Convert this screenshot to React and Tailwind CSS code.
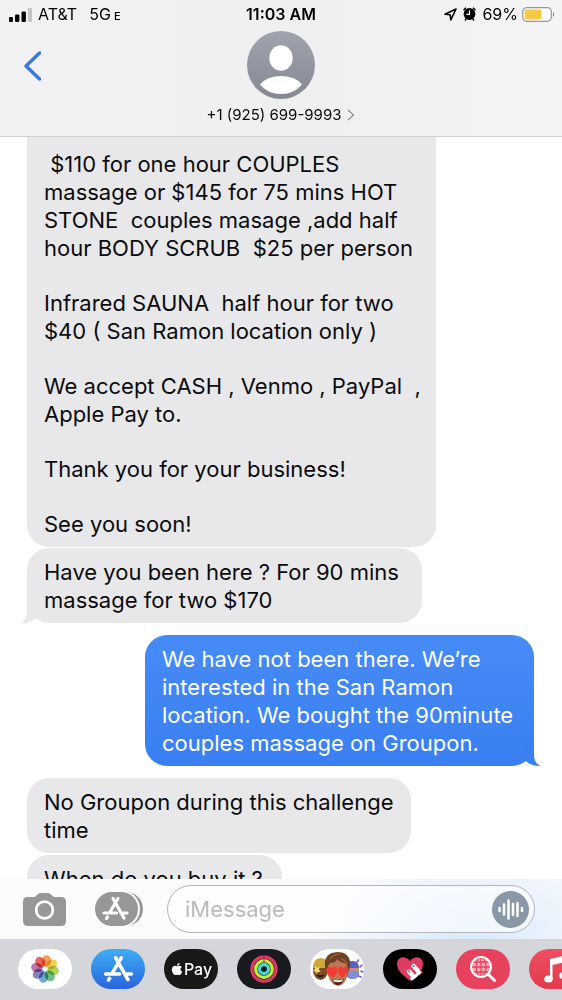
import React from "react";
import { FaApple } from "react-icons/fa";

const ink = "text-[#0b0b0d]";

function Status() {
  return (
    <div className="grid grid-cols-3 items-center h-7 px-2 text-base text-black">
      <div className="flex items-center gap-1.5">
        <svg width="24" height="15" viewBox="0 0 24 15" aria-hidden="true">
          <rect x="1" y="10" width="4" height="5" rx="1.2" />
          <rect x="7" y="7.5" width="4.4" height="7.5" rx="1.2" />
          <rect x="13.5" y="4.5" width="4.4" height="10.5" rx="1.2" />
          <rect x="20" y="1" width="4" height="14" rx="1.2" fill="#c4c4c6" />
        </svg>
        <span>AT&amp;T</span>
        <span className="ml-1.5 flex items-baseline gap-[3px]">5G<span className="text-[11px] font-medium">E</span></span>
      </div>
      <div className="text-center font-semibold">11:03 AM</div>
      <div className="flex items-center justify-end gap-1.5">
        <svg width="13" height="13" viewBox="0 0 13 13" fill="none" stroke="#000" strokeWidth="1.6" strokeLinejoin="round" aria-hidden="true">
          <path d="M12 1 L1 6.2 L6.2 6.8 L6.8 12 Z" />
        </svg>
        <svg width="13" height="14" viewBox="0 0 13 14" aria-hidden="true">
          <circle cx="6.5" cy="7" r="5.9" />
          <path d="M.6 3.2 L3 .8 M12.4 3.2 L10 .8 M2 13.4 L3.2 12 M11 13.4 L9.8 12" stroke="#000" strokeWidth="1.5" />
          <path d="M6.5 3.4 V7.4 H3.4" fill="none" stroke="#fff" strokeWidth="1.2" />
        </svg>
        <span>69%</span>
        <svg width="33" height="15" viewBox="0 0 33 15" className="-ml-0.5 -mr-px" aria-hidden="true">
          <rect x=".7" y=".7" width="28.6" height="13.6" rx="4" fill="#fbfbfb" stroke="#97979b" strokeWidth="1.2" />
          <rect x="2.6" y="2.6" width="17" height="9.8" rx="2" fill="#f5c944" />
          <path d="M31 5 Q33 7.5 31 10 Z" fill="#77777b" />
        </svg>
      </div>
    </div>
  );
}

function Header() {
  return (
    <header className={`shrink-0 h-[137px] border-b border-[#d2d2d5] bg-linear-to-r from-[#f2f2f4] via-[#efeff2] to-[#f4f4f6] ${ink}`}>
      <Status />
      <div className="grid grid-cols-[1fr_auto_1fr] px-5">
        <button aria-label="Back" className="justify-self-start self-start mt-5 h-9 w-6 flex items-center justify-center">
          <svg width="18" height="30" viewBox="0 0 18 30" fill="none" stroke="#3a76de" strokeWidth="3.4" strokeLinecap="round" strokeLinejoin="round">
            <path d="M16.500 2 L3 15 L16.500 28" />
          </svg>
        </button>
        <button className="flex flex-col items-center pt-[3px]">
          <svg width="68" height="68" viewBox="0 0 68 68" aria-hidden="true">
            <defs>
              <linearGradient id="avatar" x2="0" y2="1">
                <stop stopColor="#a0a4b0" />
                <stop offset="1" stopColor="#858892" />
              </linearGradient>
            </defs>
            <circle cx="34" cy="34" r="34" fill="url(#avatar)" />
            <ellipse cx="34" cy="27" rx="11.7" ry="12.7" fill="#fff" />
            <path d="M13 53.5 Q20 45 34 45 Q48 45 55 53.5 Q47 63 34 63 Q21 63 13 53.5Z" fill="#fff" />
          </svg>
          <span className="flex items-center gap-1.5 text-[15px] leading-6 mt-1">
            +1 (925) 699-9993
            <svg width="8" height="12" viewBox="0 0 8 12" fill="none" stroke="#8c8c90" strokeWidth="1.2" aria-hidden="true">
              <path d="M1 1 L6.5 6 L1 11" />
            </svg>
          </span>
        </button>
        <span />
      </div>
    </header>
  );
}

function Received({ children, className = "", tail }) {
  return (
    <div className={`relative self-start bg-[#e8e8ea] px-[17px] pb-[9px] ${className}`}>
      {children}
      {tail && (
        <svg className="absolute bottom-0 -left-1.5" width="16" height="24" viewBox="0 0 16 24" fill="#e8e8ea" aria-hidden="true">
          <path d="M6 0 V12 C6 18 4 22 0 24 C6 24.300 11 23 14 19.500 V0Z" />
        </svg>
      )}
    </div>
  );
}

function Messages() {
  return (
    <main className={`flex-1 min-h-0 overflow-hidden flex flex-col pl-[27px] pr-7 bg-white text-[22px] leading-7 whitespace-pre ${ink}`}>
      <Received className="shrink-0 w-[409px] pt-[13px] rounded-b-[22px] flex flex-col gap-[27px]">
        <p>{" $110 for one hour COUPLES\nmassage or $145 for 75 mins HOT\nSTONE  couples masage ,add half\nhour BODY SCRUB  $25 per person"}</p>
        <p>{"Infrared SAUNA  half hour for two\n$40 ( San Ramon location only )"}</p>
        <p>{"We accept CASH , Venmo , PayPal  ,\nApple Pay to."}</p>
        <p>Thank you for your business!</p>
        <p>See you soon!</p>
      </Received>
      <Received tail className="shrink-0 mt-px w-[395px] pt-2.5 rounded-[22px]">
        <p>{"Have you been here ? For 90 mins\nmassage for two $170"}</p>
      </Received>
      <div className="relative shrink-0 self-end mt-3 w-[389px] rounded-[22px] bg-linear-to-b from-[#468bf5] to-[#3a7ff2] px-[17px] pt-2.5 pb-[9px] text-white">
        <p>{"We have not been there. We’re\ninterested in the San Ramon\nlocation. We bought the 90minute\ncouples massage on Groupon."}</p>
        <svg className="absolute bottom-0 -right-[7px]" width="17" height="24" viewBox="0 0 17 24" fill="#3b80f2" aria-hidden="true">
          <path d="M10 0 V12 C10 18 12 22 17 24 C11 24.300 5 22.500 2 19 V0Z" />
        </svg>
      </div>
      <Received className="shrink-0 mt-3 w-[384px] pt-2.5 rounded-[22px]">
        <p>{"No Groupon during this challenge\ntime"}</p>
      </Received>
      <Received className="shrink-0 mt-0.5 w-[255px] pt-2.5 rounded-[22px]">
        <p>When do you buy it ?</p>
      </Received>
    </main>
  );
}

function StoreMark() {
  return (
    <g fill="none" stroke="#fff" strokeWidth="3.2" strokeLinecap="round">
      <path d="M15.500 1.500 L7.500 15 M10.500 1.500 L21.500 21 M1.500 16 H14 M20 16 H24.500 M5 20 L4 21.500" />
    </g>
  );
}

function Composer() {
  return (
    <div className="flex items-center h-[60px] pl-[23px] pr-[27px] bg-[radial-gradient(ellipse_160px_90px_at_84%_90%,#d9e9fd,#fbfbfc)]">
      <button aria-label="Camera">
        <svg width="43" height="34" viewBox="0 0 43 34">
          <path d="M4 5 H11 Q13 5 14 3 Q15.500 1 17.500 1 H25 Q27 1 28.500 3 Q30 5 32 5 H38 Q43 5 43 10 V29 Q43 34 38 34 H5 Q0 34 0 29 V10 Q0 5 4 5Z" fill="#97979a" />
          <circle cx="21.500" cy="18" r="8.400" fill="none" stroke="#fff" strokeWidth="2.700" />
        </svg>
      </button>
      <button aria-label="Apps" className="ml-[29px]">
        <svg width="48" height="36" viewBox="0 0 48 36">
          <rect x="5" y="1" width="43" height="34" rx="17" fill="#97979a" />
          <rect x="-2" y="-1" width="47" height="38" rx="19" fill="#fcfcfd" />
          <rect x="0" y="1" width="43" height="34" rx="17" fill="#97979a" />
          <g transform="translate(7.500 6)"><StoreMark /></g>
        </svg>
      </button>
      <div className="flex flex-1 min-w-0 items-center ml-6 h-12 rounded-full border border-[#b4b6ba] bg-white/60 pl-[17px] pr-[5px]">
        <input aria-label="iMessage" placeholder="iMessage" className="flex-1 min-w-0 bg-transparent text-[22px] outline-none placeholder:text-[#bbbbbe]" />
        <button aria-label="Record audio" className="shrink-0">
          <svg width="37" height="37" viewBox="0 0 37 37">
            <circle cx="18.500" cy="18.500" r="18.500" fill="#8a97a6" />
            <path d="M7.500 17 V20 M12 13.500 V23.500 M16.500 9.500 V27.500 M21 13 V24 M25.500 12 V25 M30 17 V20" stroke="#fff" strokeWidth="2.500" strokeLinecap="round" />
          </svg>
        </button>
      </div>
    </div>
  );
}

const petals = ["#f08a2c", "#ecc92f", "#a3c83c", "#4fae62", "#4f93cc", "#6a68b5", "#b05a9c", "#e4483c"];

function StripApp({ label, className, children }) {
  return (
    <button aria-label={label} className={`shrink-0 w-[54px] h-10 rounded-full overflow-hidden flex items-center justify-center ${className}`}>
      {children}
    </button>
  );
}

function AppStrip() {
  return (
    <nav aria-label="iMessage apps" className="flex gap-[19px] h-[61px] pt-2.5 pl-[18px] overflow-hidden bg-[#d5d6dc]">
      <StripApp label="Photos" className="bg-white">
        <svg width="28" height="28" viewBox="0 0 28 28">
          {petals.map((c, i) => (
            <ellipse key={c} cx="14" cy="5.800" rx="4.700" ry="5.800" fill={c} opacity=".82" transform={`rotate(${i * 45 + 10} 14 14)`} className="mix-blend-multiply" />
          ))}
          <circle cx="14" cy="14" r="1.800" fill="#fff" />
        </svg>
      </StripApp>
      <StripApp label="App Store" className="bg-linear-to-b from-[#3faef5] to-[#2b62dd]">
        <svg width="29" height="27" viewBox="0 0 26 24"><StoreMark /></svg>
      </StripApp>
      <StripApp label="Apple Pay" className="bg-[#191918] text-white text-base font-medium">
        <FaApple size={14} className="shrink-0" /><span>Pay</span>
      </StripApp>
      <StripApp label="Fitness" className="bg-[#191a20]">
        <svg width="28" height="28" viewBox="0 0 28 28" fill="none" strokeWidth="3.300">
          <circle cx="14" cy="14" r="12.100" stroke="#e03660" />
          <circle cx="14" cy="14" r="8.300" stroke="#c1ed3b" />
          <circle cx="14" cy="14" r="4.500" stroke="#49d8dc" />
          <path d="M14 0 V7" stroke="#8f2039" strokeWidth="1" />
        </svg>
      </StripApp>
      <StripApp label="Memoji" className="bg-white">
        <svg width="54" height="40" viewBox="0 0 54 40" className="shrink-0">
          <ellipse cx="10.500" cy="21" rx="7.500" ry="10" fill="#7b4c20" />
          <path d="M3 19 Q3 9 11 9 Q19 9 18 19Z" fill="#cfa838" />
          <path d="M5 17 L7 19 L9.500 18 L9 21 L11 23 L8 23 L6 25 L5.500 22.500 L3 21.500 L5 20Z" fill="#f4dc73" />
          <path d="M6 26 Q10 31 15 26Z" fill="#2e1810" />
          <rect x="36" y="12" width="13" height="18" rx="6" fill="#5860c6" />
          <path d="M38 19 H49 V23 H39Z" fill="#c98d7c" />
          <path d="M38 23 Q44 20 49 23 L48 28 Q43 32 38 28Z" fill="#7f91dc" />
          <path d="M47 13 L48.500 11 M50 18 L52 16 M48.500 27 L51 28 M51 22 L53 23" stroke="#6960d4" strokeWidth="1.600" strokeLinecap="round" />
          <path d="M17 18 Q17 8 27 7 Q38 7 38 19 Q38 29 34 34 Q28 40 22 34 Q17 28 17 18Z" fill="#be7655" />
          <path d="M17 24 Q13 15 16 9 Q19 3 28 3 Q36 3 39 9 Q42 16 38 24 Q38 16 35 14 Q31 14 27 10 Q26 14 20 14 Q17 17 17 24Z" fill="#6d4024" />
          <path d="M20 10 Q24 5 30 5 M31 10 Q36 11 37 16" fill="none" stroke="#966039" strokeWidth="1.300" />
          <path d="M23.500 29 C17 26 15 22 17 19 Q19 16.500 21.500 19 Q25 16 27 19 C28.500 22 26 26 23.500 29Z M32 29 C29 26 27 22 28.500 19 Q30 16 33 19 Q36 16 38 19 C40 23 36 26 32 29Z" fill="#f23b35" />
          <path d="M22 30 Q28 32 34 29.500 Q32 36.500 27.500 36 Q24 35.500 22 30Z" fill="#51231d" />
          <path d="M23 30.500 Q28 32 33 30.200 L32 32.500 Q28 34 24 32.500Z" fill="#fff" />
        </svg>
      </StripApp>
      <StripApp label="Digital Touch" className="bg-black">
        <svg width="30" height="28" viewBox="0 0 30 28">
          <path d="M15 26 C8 20 2 16 2 9 C2 1 11 0 15 6 C19 0 28 1 28 9 C28 16 22 20 15 26Z" fill="#e03b61" />
          <path d="M12 17 L18 24 M17.500 10.500 L26 19" stroke="#e03b61" strokeWidth="5" />
          <path d="M14 16.500 L18 21 M18.500 11 L23 16" stroke="#fff" strokeWidth="4.400" strokeLinecap="round" />
          <path d="M16 24.500 L20 21.500 L25.500 16.500" stroke="#fff" strokeWidth="3" fill="none" />
          <path d="M13.500 16 L14.500 17 M18 10.500 L19 11.500" stroke="#e03b61" strokeWidth="1.300" strokeLinecap="round" />
        </svg>
      </StripApp>
      <StripApp label="Images" className="bg-[#e8415d]">
        <svg width="28" height="28" viewBox="0 0 28 28" fill="none" stroke="#fff">
          <circle cx="12" cy="12" r="9.800" fill="#f5aab6" />
          <path d="M12 2 V22 M2 12 H22 M4 7 H20 M4 17 H20" stroke="#e8415d" strokeWidth="1.300" />
          <ellipse cx="12" cy="12" rx="5" ry="9.500" stroke="#e8415d" strokeWidth="1.300" />
          <circle cx="12" cy="12" r="10" strokeWidth="2" />
          <path d="M19.500 19.500 L25.500 25.500" strokeWidth="3" strokeLinecap="round" />
        </svg>
      </StripApp>
      <StripApp label="Music" className="bg-linear-to-b from-[#ee4f62] to-[#e23a4c]">
        <svg width="28" height="30" viewBox="0 0 28 30" fill="#fff">
          <path d="M8 5 L26 1 V21 H23.500 V8 L10.500 11 V25 H8Z" />
          <ellipse cx="6.500" cy="25" rx="4.300" ry="3.500" /><ellipse cx="21.500" cy="21.500" rx="4.300" ry="3.500" />
        </svg>
      </StripApp>
    </nav>
  );
}

export default function App() {
  return (
    <div className="flex flex-col h-screen overflow-hidden bg-white font-['Inter','Liberation_Sans',sans-serif]">
      <Header />
      <Messages />
      <footer className="shrink-0">
        <Composer />
        <AppStrip />
      </footer>
    </div>
  );
}
